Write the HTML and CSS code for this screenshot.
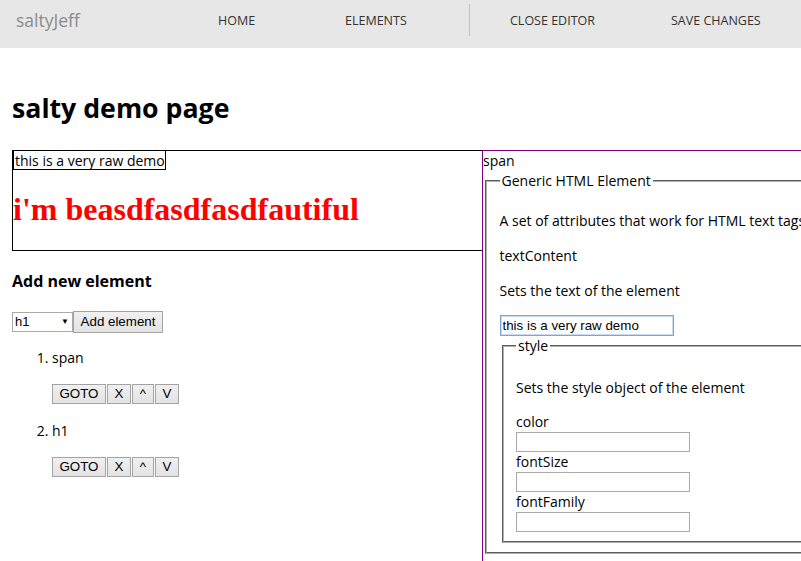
FILE: index.html
```html
<!DOCTYPE html>
<html>
<head>
<meta charset="utf-8">
<title>salty demo page</title>
<link rel="stylesheet" href="styles.css">
</head>
<body>
<nav class="navbar">
  <a class="brand">saltyJeff</a>
  <ul class="nav">
    <li class="nav-home">HOME</li>
    <li class="nav-elements">ELEMENTS</li>
    <li class="nav-sep"></li>
    <li class="nav-close">CLOSE EDITOR</li>
    <li class="nav-save">SAVE CHANGES</li>
  </ul>
</nav>
<main class="page">
  <h1 class="title">salty demo page</h1>
  <div class="workspace">
    <div class="left">
      <div class="preview">
        <div class="preview-line"><span class="raw">this is a very raw demo</span></div>
        <h1 class="beautiful">i'm beasdfasdfasdfautiful</h1>
      </div>
      <h3 class="add-title">Add new element</h3>
      <div class="add-row">
        <div class="select">h1<span class="arrow">&#9660;</span></div>
        <button class="btn add-btn">Add element</button>
      </div>
      <ol class="elements">
        <li>
          <div class="el-name">span</div>
          <div class="btns">
            <button class="btn b-goto">GOTO</button><button class="btn b-x">X</button><button class="btn b-up">^</button><button class="btn b-v">V</button>
          </div>
        </li>
        <li>
          <div class="el-name">h1</div>
          <div class="btns">
            <button class="btn b-goto">GOTO</button><button class="btn b-x">X</button><button class="btn b-up">^</button><button class="btn b-v">V</button>
          </div>
        </li>
      </ol>
    </div>
    <div class="editor">
      <div class="tag-line">span</div>
      <fieldset class="fs outer">
        <legend>Generic HTML Element</legend>
        <p>A set of attributes that work for HTML text tags</p>
        <p>textContent</p>
        <p>Sets the text of the element</p>
        <div class="input-line"><input class="text-input focused" type="text" value="this is a very raw demo"></div>
        <fieldset class="fs inner">
          <legend>style</legend>
          <p>Sets the style object of the element</p>
          <div class="field-label">color</div>
          <input class="text-input plain" type="text">
          <div class="field-label">fontSize</div>
          <input class="text-input plain" type="text">
          <div class="field-label">fontFamily</div>
          <input class="text-input plain" type="text">
        </fieldset>
      </fieldset>
    </div>
  </div>
</main>
</body>
</html>
```

FILE: styles.css
```css
html, body {
  margin: 0;
  padding: 0;
  overflow: hidden;
  background: #fff;
}
body {
  font-family: "Open Sans", "Noto Sans", sans-serif;
  font-size: 14px;
  color: #000;
}

.navbar {
  height: 48px;
  background: #e7e7e7;
  display: flex;
  align-items: flex-start;
}
.brand {
  display: block;
  padding: 0 0 0 16px;
  width: 190px;
  height: 41px;
  line-height: 41px;
  font-size: 17.5px;
  color: #8c8c8c;
}
.nav {
  list-style: none;
  margin: 0;
  padding: 0;
  display: flex;
  align-items: flex-start;
}
.nav li {
  height: 41px;
  line-height: 41px;
  font-size: 12.5px;
  color: #333;
}
.nav-home { padding-left: 12px; width: 127px; }
.nav-elements { width: 124px; }
.nav-sep {
  width: 1px;
  margin-top: 4px;
  height: 32px !important;
  background: #c0c0c0;
}
.nav-close { padding-left: 40px; width: 161px; }

.page {
  padding: 0 12px;
}
.title {
  margin: 0;
  padding-top: 45px;
  height: 57px;
  line-height: 30px;
  font-size: 26.7px;
  font-weight: bold;
}
.workspace {
  display: flex;
  align-items: flex-start;
}
.left {
  width: 471px;
  flex: none;
}
.preview {
  border: 1px solid #000;
  height: 99px;
}
.preview-line {
  height: 19px;
  line-height: 19px;
}
.raw {
  border: 1px solid #000;
  border-top: 0;
  padding: 0 0 0 1px;
  display: inline-block;
  height: 18px;
  line-height: 19px;
}
.beautiful {
  font-family: "Liberation Serif", "Times New Roman", serif;
  font-size: 32px;
  font-weight: bold;
  color: #f00;
  margin: 21px 0 0 0;
  line-height: 37px;
}
.add-title {
  font-size: 16px;
  font-weight: bold;
  margin: 19px 0 0 0;
  line-height: 22px;
}
.add-row {
  display: flex;
  align-items: center;
  margin-top: 19px;
  height: 22px;
}
.select {
  width: 57px;
  height: 18px;
  border: 1px solid #a9a9a9;
  font-family: "Liberation Sans", Arial, sans-serif;
  font-size: 13px;
  line-height: 18px;
  padding-left: 2px;
  position: relative;
  box-sizing: content-box;
}
.arrow {
  position: absolute;
  right: 3px;
  top: 0;
  font-size: 8px;
}
.btn {
  font-family: "Liberation Sans", Arial, sans-serif;
  font-size: 13.33px;
  color: #000;
  background: linear-gradient(#f0f0f0, #e3e3e3);
  border: 1px solid #a3a3a3;
  border-radius: 0;
  padding: 0 6px;
  height: 20px;
  line-height: 18px;
  margin: 0;
}
.add-btn {
  width: 90px;
  height: 22px;
}
.elements {
  margin: 14px 0 0 0;
  padding: 0 0 0 40px;
}
.el-name {
  line-height: 21px;
}
.btns {
  display: flex;
  gap: 1px;
  margin: 16px 0 16px 0;
}
.b-goto { width: 54px; }
.b-x { width: 24px; }
.b-up { width: 22px; }
.b-v { width: 24px; }

.editor {
  flex: none;
  width: 420px;
  margin-left: -1px;
  border: 1px solid #800080;
  border-right: 0;
  height: 520px;
}
.tag-line {
  line-height: 19px;
  height: 19px;
}
.input-line {
  line-height: 20px;
  height: 20px;
}
.fs {
  margin: 0 2px;
  padding: 5px 12.5px 8.75px;
  border: 2px groove #b0b0b0;
  min-width: 0;
}
.fs legend {
  padding: 0 2px;
  line-height: 21px;
}
.fs p {
  margin: 14px 0;
  line-height: 21px;
  white-space: nowrap;
}
.inner {
  padding-top: 7px;
}
.text-input {
  box-sizing: border-box;
  width: 174px;
  height: 21px;
  margin: 0;
  padding: 1px 2px;
  font-family: "Liberation Sans", Arial, sans-serif;
  font-size: 13.33px;
  color: #000;
  outline: none;
}
.focused {
  border: 1px solid #7aa6dd;
  box-shadow: inset 0 0 0 1px #c6dcf5;
  vertical-align: top;
}
.plain {
  display: block;
  height: 20px;
  border: 1px solid #a9a9a9;
}
.field-label {
  line-height: 20px;
  height: 20px;
}
```
